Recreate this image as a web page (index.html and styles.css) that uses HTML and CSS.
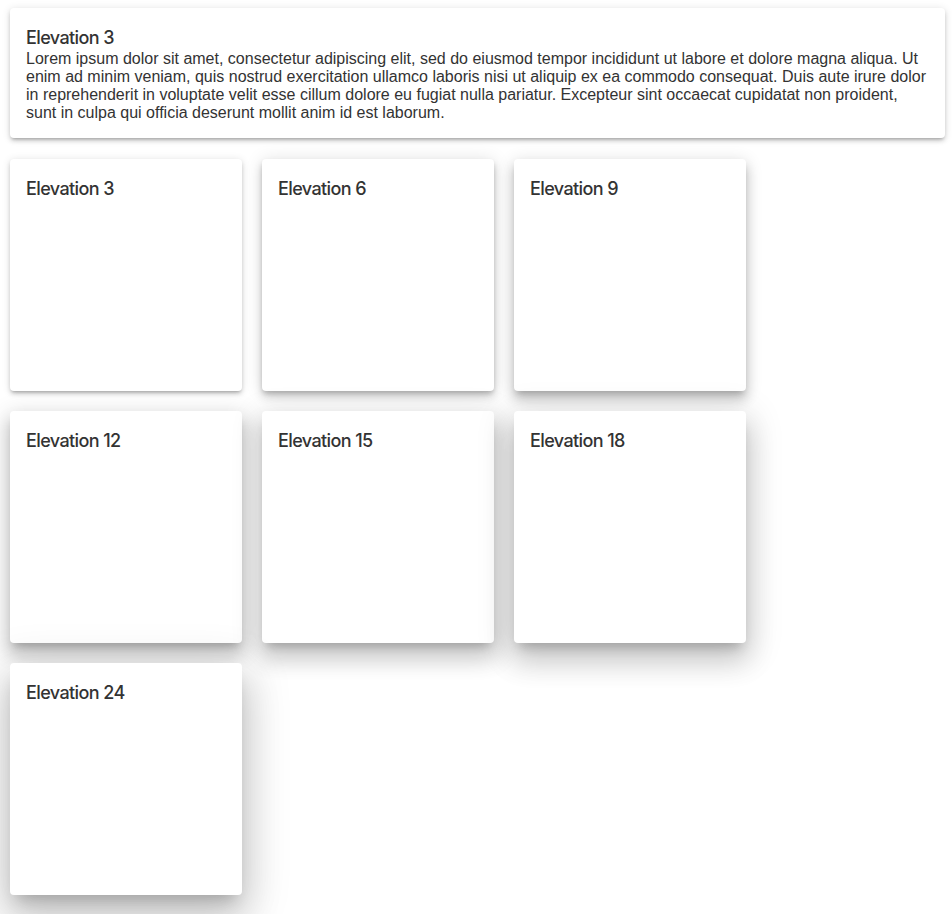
FILE: index.html
```html
<!DOCTYPE html>
<html lang="en">
<head>
  <meta charset="UTF-8">
  <title>Elevation</title>
  <link rel="stylesheet" href="styles.css">
</head>
<body>

<!-- geniş kart -->
<div class="paper wide elevation-3">
  <h3>Elevation 3</h3>
  <p>Lorem ipsum dolor sit amet, consectetur adipiscing elit, sed do eiusmod tempor incididunt ut labore et dolore magna aliqua. Ut enim ad minim veniam, quis nostrud exercitation ullamco laboris nisi ut aliquip ex ea commodo consequat. Duis aute irure dolor in reprehenderit in voluptate velit esse cillum dolore eu fugiat nulla pariatur. Excepteur sint occaecat cupidatat non proident, sunt in culpa qui officia deserunt mollit anim id est laborum.</p>
</div>

<!-- kare kartlar -->
<div class="grid">
  <div class="paper square elevation-3"><h3>Elevation 3</h3></div>
  <div class="paper square elevation-6"><h3>Elevation 6</h3></div>
  <div class="paper square elevation-9"><h3>Elevation 9</h3></div>
  <div class="paper square elevation-12"><h3>Elevation 12</h3></div>
  <div class="paper square elevation-15"><h3>Elevation 15</h3></div>
  <div class="paper square elevation-18"><h3>Elevation 18</h3></div>
  <div class="paper square elevation-24"><h3>Elevation 24</h3></div>
</div>

</body>
</html>
```

FILE: styles.css
```css
body {
  font-family: "Liberation Sans", Arial, sans-serif;
  margin: 0;
  padding: 8px 7px 40px 10px;
  background: #fff;
  color: #333;
}

.paper {
  background: #fff;
  border-radius: 4px;
  padding: 16px;
  box-sizing: border-box;
}

.paper h3 {
  font-family: Inter, "Noto Sans", sans-serif;
  font-weight: 500;
  font-size: 18px;
  letter-spacing: -0.6px;
  line-height: 25px;
  padding-top: 1px;
  margin: 0;
  color: #333;
}

.paper p {
  margin: 0;
  font-size: 16px;
  line-height: 18px;
}

.wide {
  margin-bottom: 21px;
}

.grid {
  display: grid;
  grid-template-columns: repeat(3, 232px);
  gap: 20px;
}

.square {
  width: 232px;
  height: 232px;
}

.elevation-3 {
  box-shadow: 0 3px 3px -2px rgba(0,0,0,0.2), 0 3px 4px 0 rgba(0,0,0,0.14), 0 1px 8px 0 rgba(0,0,0,0.12);
}

.elevation-6 {
  box-shadow: 0 3px 5px -1px rgba(0,0,0,0.2), 0 6px 10px 0 rgba(0,0,0,0.14), 0 1px 18px 0 rgba(0,0,0,0.12);
}

.elevation-9 {
  box-shadow: 0 5px 6px -3px rgba(0,0,0,0.2), 0 9px 12px 1px rgba(0,0,0,0.14), 0 3px 16px 2px rgba(0,0,0,0.12);
}

.elevation-12 {
  box-shadow: 0 7px 8px -4px rgba(0,0,0,0.2), 0 12px 17px 2px rgba(0,0,0,0.14), 0 5px 22px 4px rgba(0,0,0,0.12);
}

.elevation-15 {
  box-shadow: 0 8px 9px -5px rgba(0,0,0,0.2), 0 15px 22px 2px rgba(0,0,0,0.14), 0 6px 28px 5px rgba(0,0,0,0.12);
}

.elevation-18 {
  box-shadow: 0 9px 11px -5px rgba(0,0,0,0.2), 0 18px 28px 2px rgba(0,0,0,0.14), 0 7px 34px 6px rgba(0,0,0,0.12);
}

.elevation-24 {
  box-shadow: 0 11px 15px -7px rgba(0,0,0,0.2), 0 24px 38px 3px rgba(0,0,0,0.14), 0 9px 46px 8px rgba(0,0,0,0.12);
}
```
